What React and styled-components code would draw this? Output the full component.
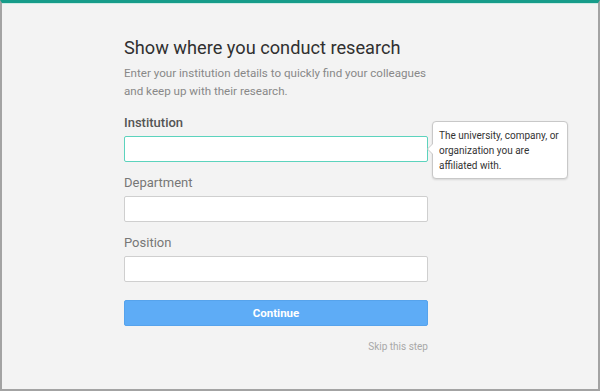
import React from "react";
import styled, { createGlobalStyle } from "styled-components";

const GlobalStyle = createGlobalStyle`
  html, body {
    margin: 0;
    padding: 0;
    background: #f3f3f3;
    font-family: Roboto, "Liberation Sans", Arial, sans-serif;
  }
`;

const Frame = styled.div`
  width: 600px;
  height: 391px;
  box-sizing: border-box;
  background: #f3f3f3;
  border: 2px solid #a3a3a3;
  border-top: 3px solid #179c8a;
  box-shadow: inset 0 1px 0 #cdebe4;
  padding: 33px 0 0 122px;
`;

const Column = styled.div`
  width: 304px;
  display: flex;
  flex-direction: column;
`;

const Title = styled.h1`
  margin: 0;
  font-size: 18.2px;
  line-height: 24px;
  font-weight: 400;
  color: #303030;
  white-space: nowrap;
`;

const Lead = styled.p`
  margin: 4px 0 14px;
  font-size: 11.6px;
  line-height: 18px;
  color: #888;
  white-space: nowrap;
`;

const Fields = styled.div`
  display: flex;
  flex-direction: column;
  gap: 12px;
`;

const Field = styled.div`
  position: relative;
  display: flex;
  flex-direction: column;
`;

const Label = styled.label`
  font-size: 13px;
  line-height: 17px;
  margin-bottom: 5px;
  color: ${(p) => (p.$strong ? "#555" : "#777")};
  font-weight: ${(p) => (p.$strong ? 500 : 400)};
`;

const Input = styled.input`
  box-sizing: border-box;
  height: 26px;
  width: 100%;
  margin: 0;
  padding: 0 8px;
  background: #fff;
  border: 1px solid ${(p) => (p.$active ? "#5cd3bd" : "#cfcfcf")};
  border-radius: 2px;
  font-family: inherit;
  font-size: 13px;
  outline: none;
`;

const Tip = styled.div`
  position: absolute;
  left: 308px;
  top: 7px;
  width: 136px;
  box-sizing: border-box;
  padding: 6px 5px 5px 6px;
  background: #fff;
  border: 1px solid #c8c8c8;
  border-radius: 4px;
  box-shadow: 0 1px 2px rgba(0, 0, 0, 0.12);
  font-size: 10px;
  line-height: 15px;
  color: #333;

  &::before,
  &::after {
    content: "";
    position: absolute;
    top: 21px;
    border-style: solid;
    border-color: transparent;
  }
  &::before {
    left: -6px;
    border-width: 6px 6px 6px 0;
    border-right-color: #c8c8c8;
  }
  &::after {
    left: -5px;
    border-width: 6px 6px 6px 0;
    border-right-color: #fff;
  }
`;

const Button = styled.button`
  margin-top: 18px;
  height: 26px;
  width: 100%;
  border: 1px solid #56a3ec;
  border-radius: 2px;
  background: #5eacf6;
  color: #fff;
  font-family: inherit;
  font-size: 11.5px;
  font-weight: 700;
  cursor: pointer;
`;

const Skip = styled.a`
  align-self: flex-end;
  margin-top: 14px;
  font-size: 10px;
  line-height: 14px;
  color: #a8a8a8;
  text-decoration: none;
  cursor: pointer;
`;

export default function App() {
  return (
    <>
      <GlobalStyle />
      <Frame>
        <Column>
          <Title>Show where you conduct research</Title>
          <Lead>
            Enter your institution details to quickly find your colleagues
            <br />
            and keep up with their research.
          </Lead>
          <Fields>
            <Field>
              <Label $strong>Institution</Label>
              <Input $active />
              <Tip>
                The university, company, or
                <br />
                organization you are
                <br />
                affiliated with.
              </Tip>
            </Field>
            <Field>
              <Label>Department</Label>
              <Input />
            </Field>
            <Field>
              <Label>Position</Label>
              <Input />
            </Field>
          </Fields>
          <Button>Continue</Button>
          <Skip>Skip this step</Skip>
        </Column>
      </Frame>
    </>
  );
}
